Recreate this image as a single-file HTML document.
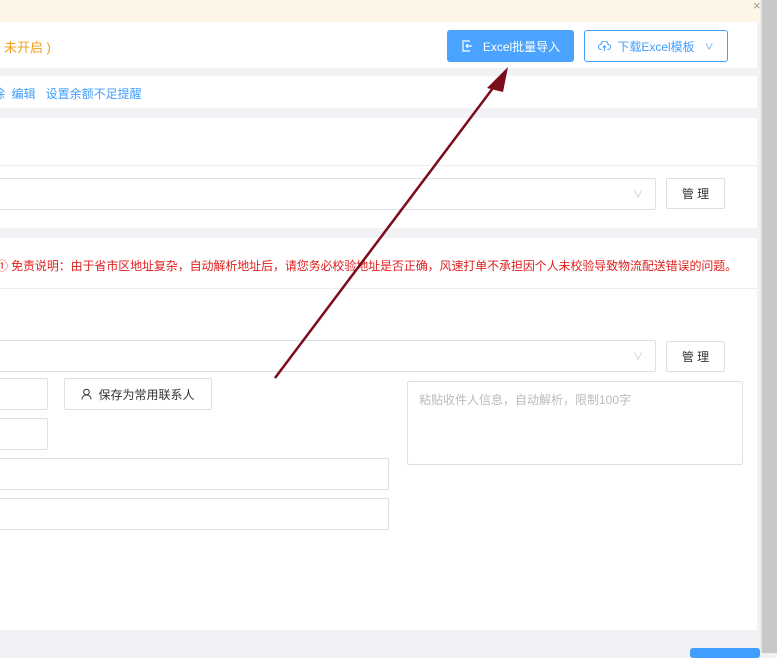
<!DOCTYPE html>
<html><head><meta charset="utf-8"><style>
*{margin:0;padding:0;box-sizing:border-box}
body{width:777px;height:653px;overflow:hidden;position:relative;background:#f0f2f5;font-family:"Liberation Sans","Noto Sans CJK SC",sans-serif;font-size:12px;color:#333}
.a{position:absolute}
.w{background:#fff}
.inp{position:absolute;border:1px solid #dcdfe6;background:#fff;border-radius:2px}
.btn{position:absolute;border:1px solid #dcdfe6;background:#fff;border-radius:2px;display:flex;align-items:center;justify-content:center;font-size:12px;color:#333}
</style></head><body>
<div class="a" style="left:0;top:0;width:760px;height:22px;background:#fdf6e6"></div>
<div class="a" style="left:753px;top:-2px;color:#999;font-size:13px">×</div>
<div class="a w" style="left:0;top:22px;width:757px;height:46px"></div>
<div class="a" style="left:-4px;top:37px;color:#f0a020;font-size:13px">( 未开启 )</div>
<div class="a" style="left:447px;top:30px;width:127px;height:32px;background:#49a3ff;border-radius:3px;color:#fff;display:flex;align-items:center;justify-content:center;font-size:12px"><svg width="12" height="12" viewBox="0 0 12 12" style="margin-right:10px"><path d="M9 1H2v10h7M5 6h6M7 4l-2 2 2 2" stroke="#fff" fill="none" stroke-width="1.2"/></svg>Excel批量导入</div>
<div class="a" style="left:584px;top:30px;width:144px;height:32px;border:1px solid #409eff;border-radius:3px;background:#fff;color:#409eff;display:flex;align-items:center;justify-content:center;font-size:12px"><svg width="13" height="11" viewBox="0 0 13 11" style="margin-right:6px"><path d="M3.5 8.5H3a2.5 2.5 0 0 1 0-5 3.5 3.5 0 0 1 7 0 2.5 2.5 0 0 1 0 5h-.5M6.5 10V5M4.8 6.5l1.7-1.7 1.7 1.7" stroke="#409eff" fill="none" stroke-width="1"/></svg>下载Excel模板<span style="margin-left:10px;font-size:9px">∨</span></div>
<div class="a w" style="left:0;top:76px;width:757px;height:32px"></div>
<div class="a" style="left:-7px;top:85px;color:#409eff;font-size:12px">除&nbsp;&nbsp;编辑&nbsp;&nbsp;&nbsp;设置余额不足提醒</div>
<div class="a w" style="left:0;top:118px;width:757px;height:110px"></div>
<div class="a" style="left:0;top:165px;width:757px;height:1px;background:#ebeef5"></div>
<div class="inp" style="left:-2px;top:178px;width:658px;height:32px"><span class="a" style="right:12px;top:7px;color:#c0c4cc;font-size:10px">∨</span></div>
<div class="btn" style="left:666px;top:178px;width:59px;height:31px">管 理</div>
<div class="a w" style="left:0;top:238px;width:757px;height:392px"></div>
<div class="a" style="left:-4px;top:257px;color:#e02020;font-size:12px;letter-spacing:-0.1px">① 免责说明：由于省市区地址复杂，自动解析地址后，请您务必校验地址是否正确，风速打单不承担因个人未校验导致物流配送错误的问题。</div>
<div class="a" style="left:0;top:288px;width:757px;height:1px;background:#ebeef5"></div>
<div class="inp" style="left:-2px;top:340px;width:658px;height:32px"><span class="a" style="right:12px;top:7px;color:#c0c4cc;font-size:10px">∨</span></div>
<div class="btn" style="left:666px;top:341px;width:59px;height:31px">管 理</div>
<div class="inp" style="left:-2px;top:378px;width:50px;height:32px"></div>
<div class="btn" style="left:64px;top:378px;width:148px;height:32px"><svg width="11" height="12" viewBox="0 0 11 12" style="margin-right:6px"><circle cx="5.5" cy="4" r="2.8" stroke="#333" fill="none"/><path d="M1 11.5c0-3 2-4.5 4.5-4.5S10 8.5 10 11.5" stroke="#333" fill="none"/></svg>保存为常用联系人</div>
<div class="inp" style="left:407px;top:381px;width:336px;height:84px"><span class="a" style="left:11px;top:9px;color:#bbb;font-size:12px">粘贴收件人信息，自动解析，限制100字</span></div>
<div class="inp" style="left:-2px;top:418px;width:50px;height:32px"></div>
<div class="inp" style="left:-2px;top:458px;width:391px;height:32px"></div>
<div class="inp" style="left:-2px;top:498px;width:391px;height:32px"></div>
<div class="a" style="left:690px;top:648px;width:70px;height:10px;background:#409eff;border-radius:3px"></div>
<div class="a" style="left:762px;top:0;width:15px;height:653px;background:#c8c8c8"></div>
<div class="a" style="left:760px;top:0;width:2px;height:653px;background:#e8e8e8"></div>
<svg class="a" style="left:0;top:0" width="777" height="653"><line x1="275" y1="378" x2="496" y2="84" stroke="#7a0c1c" stroke-width="2.5"/><polygon points="508,67 487,88 503,92" fill="#7a0c1c"/></svg>
</body></html>
